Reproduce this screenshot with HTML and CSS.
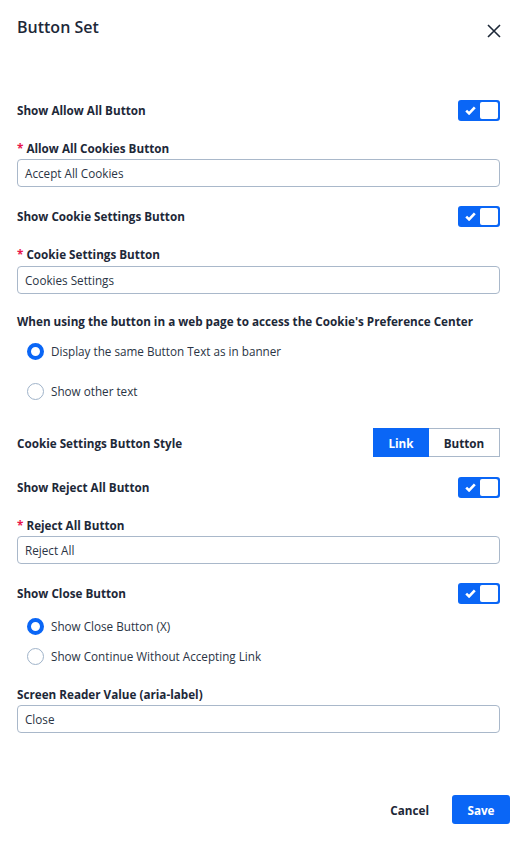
FILE: index.html
```html
<!DOCTYPE html>
<html lang="en">
<head>
<meta charset="utf-8">
<title>Button Set</title>
<link rel="stylesheet" href="styles.css">
</head>
<body>
<div class="panel">
  <div class="header">
    <h1 class="title">Button Set</h1>
    <button class="close" aria-label="Close">
      <svg width="14" height="14" viewBox="0 0 14 14"><path d="M1 1L13 13M13 1L1 13" stroke="#1d2838" stroke-width="1.6" fill="none"/></svg>
    </button>
  </div>

  <div class="row toggle-row first">
    <span class="label">Show Allow All Button</span>
    <span class="toggle"><svg class="check" width="11" height="9" viewBox="0 0 11 9"><path d="M1.2 4.6L4.1 7.4L9.8 1.4" stroke="#fff" stroke-width="2.6" fill="none"/></svg><span class="knob"></span></span>
  </div>
  <div class="field-label"><span class="req">*</span> Allow All Cookies Button</div>
  <div class="input">Accept All Cookies</div>

  <div class="row toggle-row">
    <span class="label">Show Cookie Settings Button</span>
    <span class="toggle"><svg class="check" width="11" height="9" viewBox="0 0 11 9"><path d="M1.2 4.6L4.1 7.4L9.8 1.4" stroke="#fff" stroke-width="2.6" fill="none"/></svg><span class="knob"></span></span>
  </div>
  <div class="field-label"><span class="req">*</span> Cookie Settings Button</div>
  <div class="input in-2">Cookies Settings</div>

  <div class="question">When using the button in a web page to access the Cookie's Preference Center</div>
  <div class="radio r-first"><span class="dot on"></span>Display the same Button Text as in banner</div>
  <div class="radio r-wide"><span class="dot"></span>Show other text</div>

  <div class="row style-row">
    <span class="label">Cookie Settings Button Style</span>
    <span class="seg"><span class="seg-item active">Link</span><span class="seg-item btn">Button</span></span>
  </div>

  <div class="row toggle-row">
    <span class="label">Show Reject All Button</span>
    <span class="toggle"><svg class="check" width="11" height="9" viewBox="0 0 11 9"><path d="M1.2 4.6L4.1 7.4L9.8 1.4" stroke="#fff" stroke-width="2.6" fill="none"/></svg><span class="knob"></span></span>
  </div>
  <div class="field-label"><span class="req">*</span> Reject All Button</div>
  <div class="input">Reject All</div>

  <div class="row toggle-row">
    <span class="label">Show Close Button</span>
    <span class="toggle"><svg class="check" width="11" height="9" viewBox="0 0 11 9"><path d="M1.2 4.6L4.1 7.4L9.8 1.4" stroke="#fff" stroke-width="2.6" fill="none"/></svg><span class="knob"></span></span>
  </div>
  <div class="radio r-first"><span class="dot on"></span>Show Close Button (X)</div>
  <div class="radio r-tight"><span class="dot"></span>Show Continue Without Accepting Link</div>

  <div class="field-label after-radio">Screen Reader Value (aria-label)</div>
  <div class="input">Close</div>
</div>
<div class="footer">
  <button class="cancel">Cancel</button>
  <button class="save">Save</button>
</div>
</body>
</html>
```

FILE: styles.css
```css
* { box-sizing: border-box; }
html, body { margin: 0; padding: 0; background: #fff; }
body {
  font-family: "Open Sans", "Liberation Sans", sans-serif;
  color: #1d2838;
  width: 528px;
}
.panel { padding: 0 28px 0 17px; display: flex; flex-direction: column; }
.header {
  margin-top: 16px;
  height: 22px;
  display: flex;
  justify-content: space-between;
  align-items: center;
}
.title { margin: 0; font-size: 16px; font-weight: 600; line-height: 22px; }
.close {
  border: 0; background: none; padding: 0; width: 14px; height: 14px;
  margin-top: 7px; margin-right: -1px; display: block;
}
.close svg { display: block; }
.row { display: flex; justify-content: space-between; align-items: center; }
.label { font-size: 11.7px; font-weight: 700; line-height: 16px; }
.toggle-row { height: 22px; margin-top: 18px; }
.toggle-row.first { margin-top: 61px; }
.toggle {
  width: 42px; height: 21px; background: #0a66f6; border-radius: 3px;
  position: relative; display: flex; align-items: center; padding-left: 7px;
}
.check { display: block; }
.knob {
  position: absolute; right: 2px; top: 2px; width: 18px; height: 17px;
  background: #fff; border-radius: 2px;
}
.field-label { font-size: 11.7px; font-weight: 700; line-height: 16px; margin-top: 19px; }
.field-label.after-radio { margin-top: 20px; }
.req { color: #e8154b; }
.input {
  margin-top: 3px; height: 28px; border: 1px solid #a9b8ca; border-radius: 4px;
  font-size: 11.7px; line-height: 26px; padding-left: 7px; color: #2a3444;
}
.input.in-2 { margin-top: 4px; }
.question { font-size: 11.7px; font-weight: 700; line-height: 16px; margin-top: 19px; }
.radio {
  display: flex; align-items: center; height: 20px; font-size: 11.7px;
  color: #2a3444; padding-left: 10px;
}
.radio.r-first { margin-top: 12px; }
.radio.r-wide { margin-top: 20px; }
.radio.r-tight { margin-top: 10px; }
.dot {
  width: 17px; height: 17px; border-radius: 50%; border: 1px solid #9fb3c9;
  margin-right: 7px; flex: none;
}
.dot.on { border: 4px solid #0a66f6; }
.style-row { margin-top: 27px; height: 29px; }
.seg { display: flex; height: 29px; }
.seg-item {
  display: flex; align-items: center; justify-content: center;
  font-size: 11.7px; font-weight: 700; height: 29px;
}
.seg-item.active { width: 56px; background: #0a66f6; color: #fff; }
.seg-item.btn { width: 71px; border: 1px solid #a9b8ca; border-left: 0; color: #1d2838; }
.style-row + .toggle-row { margin-top: 19px; }
.footer {
  display: flex; justify-content: flex-end; align-items: center;
  padding-right: 18px; margin-top: 62px; gap: 23px;
}
.footer button { font-family: inherit; font-size: 11.7px; font-weight: 700; border: 0; cursor: pointer; }
.cancel { background: none; color: #1d2838; padding: 0; }
.save {
  background: #0a66f6; color: #fff; width: 58px; height: 29px; border-radius: 3px; padding: 0;
}
```
